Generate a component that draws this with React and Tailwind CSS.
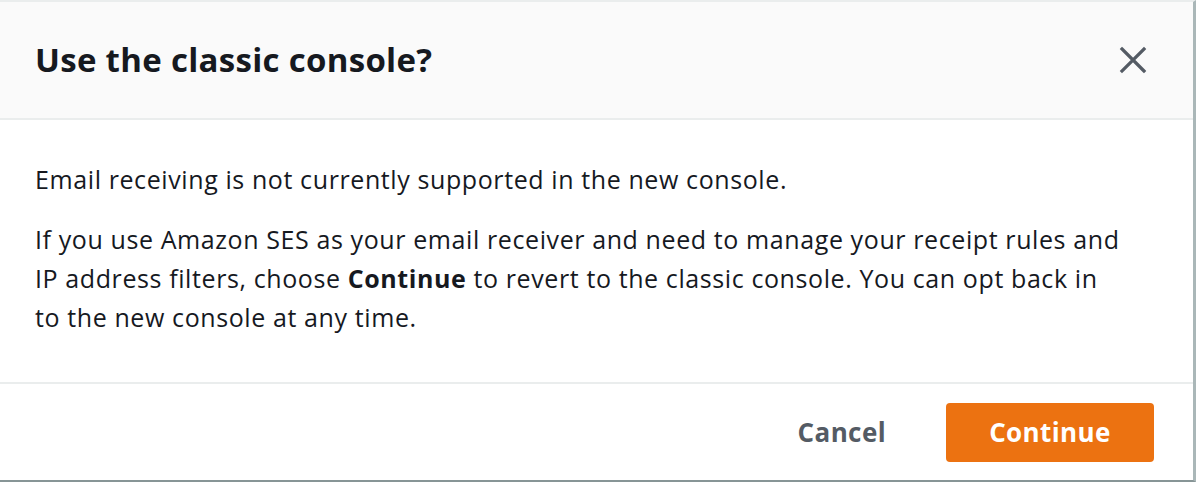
import React from 'react';

export default function App() {
  return (
    <div className="w-[1196px] h-[482px] bg-white overflow-hidden" style={{ fontFamily: '"Open Sans", "Noto Sans", Arial, sans-serif' }}>
      <div className="h-full flex flex-col border-t-2 border-[#eaeded] border-r-[3px] border-r-[#aab7b8] border-b-2 border-b-[#879596]">
        {/* Header */}
        <div className="h-[118px] shrink-0 flex items-center justify-between pl-[35px] pr-[46px] bg-[#fafafa] border-b-2 border-[#eaeded]">
          <h1 className="text-[33px] font-bold text-[#16191f] tracking-[0.3px]">Use the classic console?</h1>
          <button className="text-[#545b64]" aria-label="Close">
            <svg width="28" height="28" viewBox="0 0 28 28" fill="none" stroke="currentColor" strokeWidth="3.2" strokeLinecap="square">
              <path d="M3 3 L25 25 M25 3 L3 25" />
            </svg>
          </button>
        </div>

        {/* Body */}
        <div className="flex-1 px-[35px] pt-[40px] text-[25px] tracking-[0.6px] leading-[39px] text-[#16191f]">
          <p className="mb-[21px]">Email receiving is not currently supported in the new console.</p>
          <p>
            If you use Amazon SES as your email receiver and need to manage your receipt rules and
            <br />
            IP address filters, choose <b className="font-bold">Continue</b> to revert to the classic console. You can opt back in
            <br />
            to the new console at any time.
          </p>
        </div>

        {/* Footer */}
        <div className="h-[98px] shrink-0 flex items-center justify-end gap-[60px] pr-[39px] border-t-2 border-[#eaeded]">
          <button className="text-[26px] tracking-[0.4px] font-bold text-[#545b64]">Cancel</button>
          <button className="w-[208px] h-[59px] rounded-[4px] bg-[#ec7211] text-white text-[26px] tracking-[0.4px] font-bold">Continue</button>
        </div>
      </div>
    </div>
  );
}
